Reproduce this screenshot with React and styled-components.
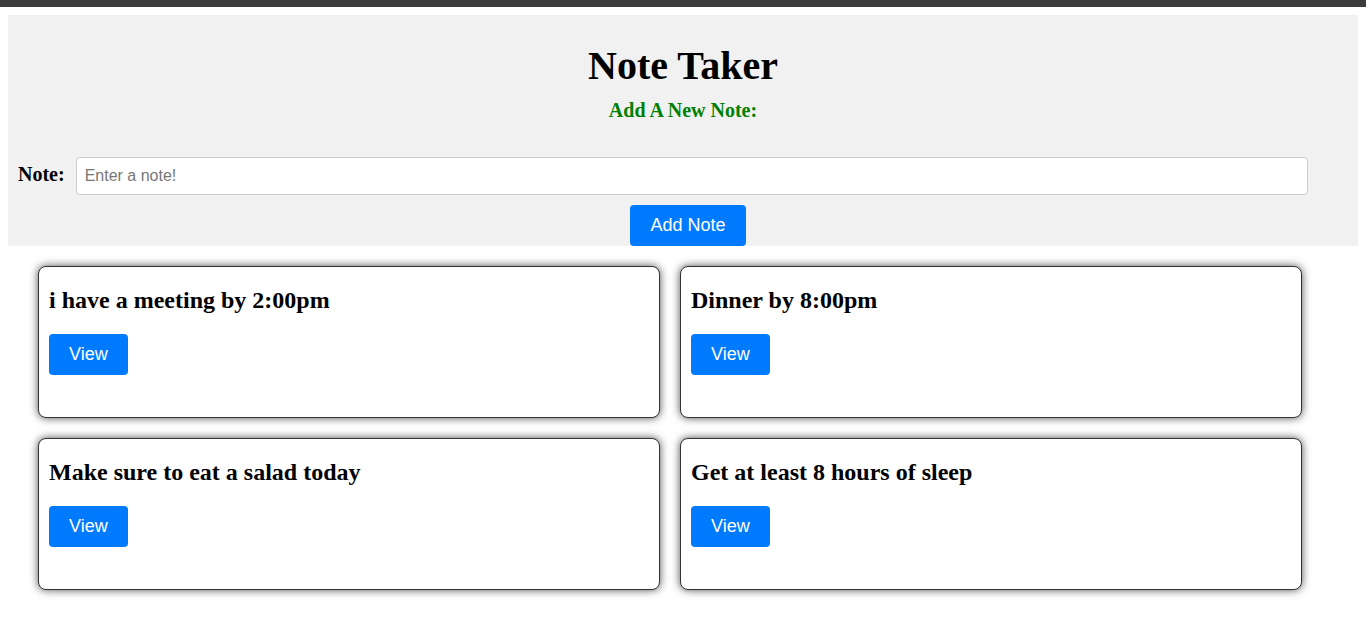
import React, { useState } from 'react'
import styled, { createGlobalStyle } from 'styled-components'

const GlobalStyle = createGlobalStyle`
  body {
    margin: 0;
    background: #fff;
    font-family: "Liberation Serif", "Times New Roman", serif;
  }
`

const TopBar = styled.div`
  height: 7px;
  background: #3c3c3c;
`

const Page = styled.div`
  padding: 8px;
`

const Panel = styled.header`
  background: #f1f1f1;
  display: flex;
  flex-direction: column;
  align-items: center;
  padding-top: 28px;
  height: 231px;
  box-sizing: border-box;
`

const Title = styled.h1`
  margin: 0;
  font-size: 40px;
  line-height: 46px;
  font-weight: bold;
  color: #000;
`

const Subtitle = styled.h3`
  margin: 10px 0 0;
  font-size: 20px;
  line-height: 22px;
  color: green;
`

const InputRow = styled.div`
  align-self: stretch;
  display: flex;
  align-items: center;
  gap: 11px;
  margin-top: 36px;
  padding: 0 50px 0 10px;
`

const Label = styled.label`
  font-weight: bold;
  font-size: 20px;
  margin-top: -4px;
`

const NoteInput = styled.input`
  flex: 1;
  height: 38px;
  box-sizing: border-box;
  border: 1px solid #ccc;
  border-radius: 4px;
  padding: 0 8px;
  font-family: "Liberation Sans", Arial, sans-serif;
  font-size: 16px;
  color: #333;
  background: #fff;
  outline: none;

  &::placeholder {
    color: #777;
  }
`

const Button = styled.button`
  height: 41px;
  padding: 0 20px;
  border: none;
  border-radius: 4px;
  background: #007bff;
  color: #fff;
  font-family: "Liberation Sans", Arial, sans-serif;
  font-size: 18px;
  cursor: pointer;
  margin-top: ${(p) => p.$top || 0}px;
  margin-left: ${(p) => p.$left || 0}px;
`

const Grid = styled.div`
  display: grid;
  grid-template-columns: 622px 622px;
  gap: 20px;
  padding: 20px 30px;
`

const Card = styled.div`
  height: 152px;
  box-sizing: border-box;
  background: #fff;
  border: 1px solid #333;
  border-radius: 8px;
  box-shadow: 0 0 8px rgba(0, 0, 0, 0.7);
  padding: 21px 10px 0;
`

const CardTitle = styled.h2`
  margin: 0 0 21px;
  font-size: 24px;
  line-height: 25px;
  font-weight: bold;
`

const initialNotes = [
  'i have a meeting by 2:00pm',
  'Dinner by 8:00pm',
  'Make sure to eat a salad today',
  'Get at least 8 hours of sleep',
]

const App = () => {
  const [notes, setNotes] = useState(initialNotes)
  const [text, setText] = useState('')

  const addNote = () => {
    if (!text.trim()) return
    setNotes([...notes, text])
    setText('')
  }

  return (
    <>
      <GlobalStyle />
      <TopBar />
      <Page>
        <Panel>
          <Title>Note Taker</Title>
          <Subtitle>Add A New Note:</Subtitle>
          <InputRow>
            <Label htmlFor="note">Note:</Label>
            <NoteInput
              id="note"
              placeholder="Enter a note!"
              value={text}
              onChange={(e) => setText(e.target.value)}
            />
          </InputRow>
          <Button $top={10} $left={10} onClick={addNote}>Add Note</Button>
        </Panel>
        <Grid>
          {notes.map((n, i) => (
            <Card key={i}>
              <CardTitle>{n}</CardTitle>
              <Button>View</Button>
            </Card>
          ))}
        </Grid>
      </Page>
    </>
  )
}

export default App
